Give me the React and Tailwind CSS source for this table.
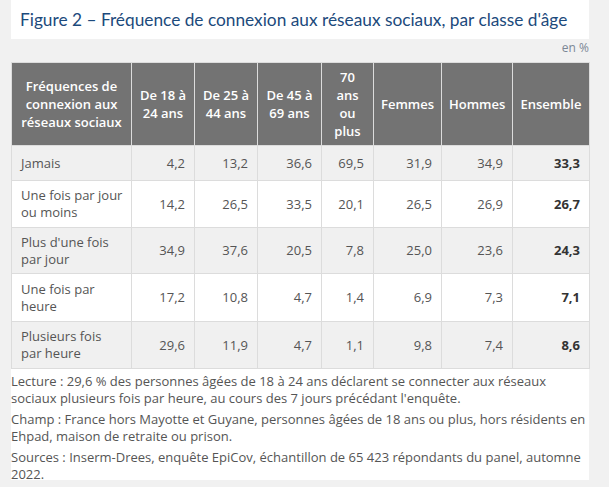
import React from "react";

const rows = [
  [["Jamais"], "4,2", "13,2", "36,6", "69,5", "31,9", "34,9", "33,3", "h-[35px]", "bg-[#f0f0f0]"],
  [["Une fois par jour", "ou moins"], "14,2", "26,5", "33,5", "20,1", "26,5", "26,9", "26,7", "h-[47px]", "bg-white"],
  [["Plus d'une fois", "par jour"], "34,9", "37,6", "20,5", "7,8", "25,0", "23,6", "24,3", "h-[46px]", "bg-[#f0f0f0]"],
  [["Une fois par", "heure"], "17,2", "10,8", "4,7", "1,4", "6,9", "7,3", "7,1", "h-[48px]", "bg-white"],
  [["Plusieurs fois", "par heure"], "29,6", "11,9", "4,7", "1,1", "9,8", "7,4", "8,6", "h-[47px]", "bg-[#f0f0f0]"],
];

const headers = [
  "Fréquences de connexion aux réseaux sociaux",
  "De 18 à 24 ans",
  "De 25 à 44 ans",
  "De 45 à 69 ans",
  "70 ans ou plus",
  "Femmes",
  "Hommes",
  "Ensemble",
];

const widths = [120, 63, 63, 64, 52, 68, 71, 77];

export default function App() {
  return (
    <div className="min-h-[487px] w-[609px] bg-[#f1f1f1] pl-[11px] pr-[20px]" style={{ fontFamily: '"Open Sans", sans-serif' }}>
      <div className="h-[39px] bg-white flex items-center pl-[9px]">
        <h1 className="text-[#1c4a7c] text-[17.3px] font-normal leading-none whitespace-nowrap" style={{ fontFamily: 'Lato, sans-serif' }}>
          Figure 2 – Fréquence de connexion aux réseaux sociaux, par classe d'âge
        </h1>
      </div>
      <div className="h-[23px] flex items-start justify-end pt-[1px]">
        <span className="text-[12px] leading-[15px] text-[#7b8795]">en %</span>
      </div>
      <table className="w-[578px] table-fixed border-collapse text-[13px]">
        <colgroup>
          {widths.map((w, i) => (
            <col key={i} style={{ width: w }} />
          ))}
        </colgroup>
        <thead>
          <tr className="h-[83px] bg-[#737373]">
            {headers.map((h, i) => (
              <th
                key={i}
                className={`border border-[#dcdcdc] text-white font-semibold leading-[18px] text-center align-middle ${i === 0 ? "px-[9px]" : "px-[7px]"}`}
              >
                {h}
              </th>
            ))}
          </tr>
        </thead>
        <tbody>
          {rows.map((r, ri) => (
            <tr key={ri} className={`${r[8]} ${r[9]}`}>
              <td className="border border-[#dcdcdc] pl-[9px] pr-[2px] text-left align-middle leading-[17px] text-[#555555] whitespace-nowrap">
                {r[0].map((l, li) => (
                  <div key={li}>{l}</div>
                ))}
              </td>
              {r.slice(1, 8).map((v, vi) => (
                <td
                  key={vi}
                  className={`border border-[#dcdcdc] pr-[9px] text-right align-middle leading-[17px] ${vi === 6 ? "font-bold text-[#333333]" : "text-[#555555]"}`}
                >
                  {v}
                </td>
              ))}
            </tr>
          ))}
        </tbody>
      </table>
      <div className="bg-white w-[578px] h-[111px] pt-[4px] text-[13px] leading-[17px] text-[#555555] flex flex-col gap-[4px]">
        <p>Lecture : 29,6 % des personnes âgées de 18 à 24 ans déclarent se connecter aux réseaux sociaux plusieurs fois par heure, au cours des 7 jours précédant l'enquête.</p>
        <p>Champ : France hors Mayotte et Guyane, personnes âgées de 18 ans ou plus, hors résidents en Ehpad, maison de retraite ou prison.</p>
        <p>Sources : Inserm-Drees, enquête EpiCov, échantillon de 65 423 répondants du panel, automne 2022.</p>
      </div>
    </div>
  );
}
